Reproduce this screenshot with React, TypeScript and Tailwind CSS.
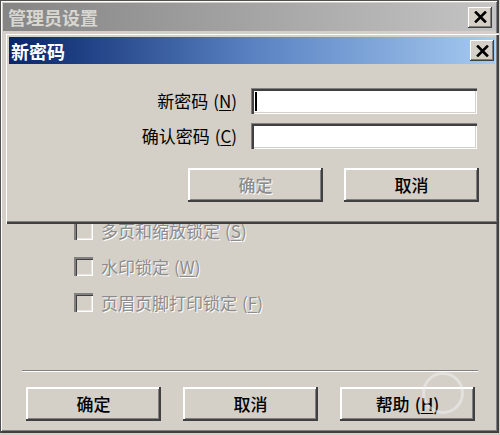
import React from 'react';

const cjk = '"Noto Sans CJK SC", "Noto Sans", sans-serif';

const CloseBox = () => (
  <div className="flex h-[21px] w-[24px] items-center justify-center bg-[#d4d0c8] shadow-[inset_-1px_-1px_#404040,inset_1px_1px_#ffffff,inset_-2px_-2px_#808080]">
    <svg width="13" height="12" viewBox="0 0 13 12">
      <path d="M2 1.5 L11 10.5 M11 1.5 L2 10.5" stroke="#000" strokeWidth="2.6" strokeLinecap="square" />
    </svg>
  </div>
);

// "(N)" style mnemonic with the letter underlined
const Key = ({k}: {k: string}) => (
  <span className="ml-[5px]">
    (<span className="underline underline-offset-2">{k}</span>)
  </span>
);

const Button = ({children, disabled}: {children: React.ReactNode; disabled?: boolean}) => (
  <div
    className={
      'flex h-[34px] w-[135px] items-center justify-center bg-[#d4d0c8] text-[17px] font-medium shadow-[inset_-2px_-2px_#404040,inset_2px_2px_#ffffff,inset_-3px_-3px_#808080] ' +
      (disabled ? 'text-[#8c8c8c] [text-shadow:1px_1px_0_#ffffff]' : 'text-black')
    }
  >
    {children}
  </div>
);

const CheckRow = ({label, k}: {label: string; k: string}) => (
  <div className="flex h-[19px] items-center gap-[8px]">
    <div className="h-[19px] w-[19px] bg-[#d4d0c8] shadow-[inset_2px_2px_#808080,inset_3px_3px_#404040,inset_-1px_-1px_#ffffff,inset_-2px_-2px_#e8e6e0]" />
    <span className="text-[17px] leading-none text-[#8c8c8c] [text-shadow:1px_1px_0_#ffffff]">
      {label}
      <Key k={k} />
    </span>
  </div>
);

const Field = () => (
  <div className="h-[26px] bg-white shadow-[inset_1px_1px_#808080,inset_3px_3px_#404040,inset_-1px_-1px_#ffffff,inset_-2px_-2px_#d4d0c8]" />
);

export default function App() {
  return (
    <div
      className="relative h-[435px] w-[500px] overflow-hidden bg-[#d4d0c8]"
      style={{fontFamily: cjk}}
    >
      {/* outer window: 管理员设置 */}
      <div className="flex h-[433px] w-[499px] flex-col p-[3px] shadow-[inset_1px_1px_#505050,inset_-2px_-2px_#404040,inset_2px_2px_#ffffff,inset_-3px_-3px_#808080]">
        <div className="flex h-[28px] items-center justify-between bg-gradient-to-r from-[#858585] to-[#c4c4c4] pl-[5px] pr-[4px]">
          <span className="text-[18px] font-bold leading-none text-[#d8d6d0]">管理员设置</span>
          <CloseBox />
        </div>

        <div className="flex flex-col gap-[17px] pl-[71px] pt-[190px]">
          <CheckRow label="多页和缩放锁定" k="S" />
          <CheckRow label="水印锁定" k="W" />
          <CheckRow label="页眉页脚打印锁定" k="F" />
        </div>

        <div className="ml-[19px] mr-[18px] mt-[58px] h-[2px] border-b border-t border-b-white border-t-[#808080]" />

        <div className="mt-[15px] flex gap-[22px] pl-[23px]">
          <Button>确定</Button>
          <Button>取消</Button>
          <Button>
            帮助
            <Key k="H" />
          </Button>
        </div>
      </div>

      {/* faint watermark ring */}
      <div className="pointer-events-none absolute left-[422px] top-[372px] h-[42px] w-[42px] rounded-full border-[3px] border-[#f2f2f2] opacity-50" />

      {/* inner dialog: 新密码 */}
      <div className="absolute left-[5px] top-[33px] flex h-[191px] w-[494px] flex-col bg-[#d4d0c8] p-[4px] shadow-[inset_1px_1px_#d4d0c8,inset_2px_2px_#ffffff,inset_-2px_-2px_#404040,inset_-3px_-3px_#808080]">
        <div className="flex h-[27px] items-center justify-between bg-gradient-to-r from-[#0a246a] via-[#5a82c2] to-[#a6caf0] pl-[2px] pr-[1px]">
          <span className="text-[18px] font-bold leading-none text-white">新密码</span>
          <CloseBox />
        </div>

        <div className="mt-[24px] grid grid-cols-[228px_226px] gap-x-[14px] gap-y-[9px] text-[17px] text-black">
          <div className="flex items-center justify-end">
            新密码
            <Key k="N" />
          </div>
          <div className="relative">
            <Field />
            <div className="absolute left-[4px] top-[4px] h-[19px] w-[2px] bg-black" />
          </div>
          <div className="flex items-center justify-end">
            确认密码
            <Key k="C" />
          </div>
          <Field />
        </div>

        <div className="mt-[19px] flex justify-end gap-[21px] pr-[16px]">
          <Button disabled>确定</Button>
          <Button>取消</Button>
        </div>
      </div>
    </div>
  );
}
